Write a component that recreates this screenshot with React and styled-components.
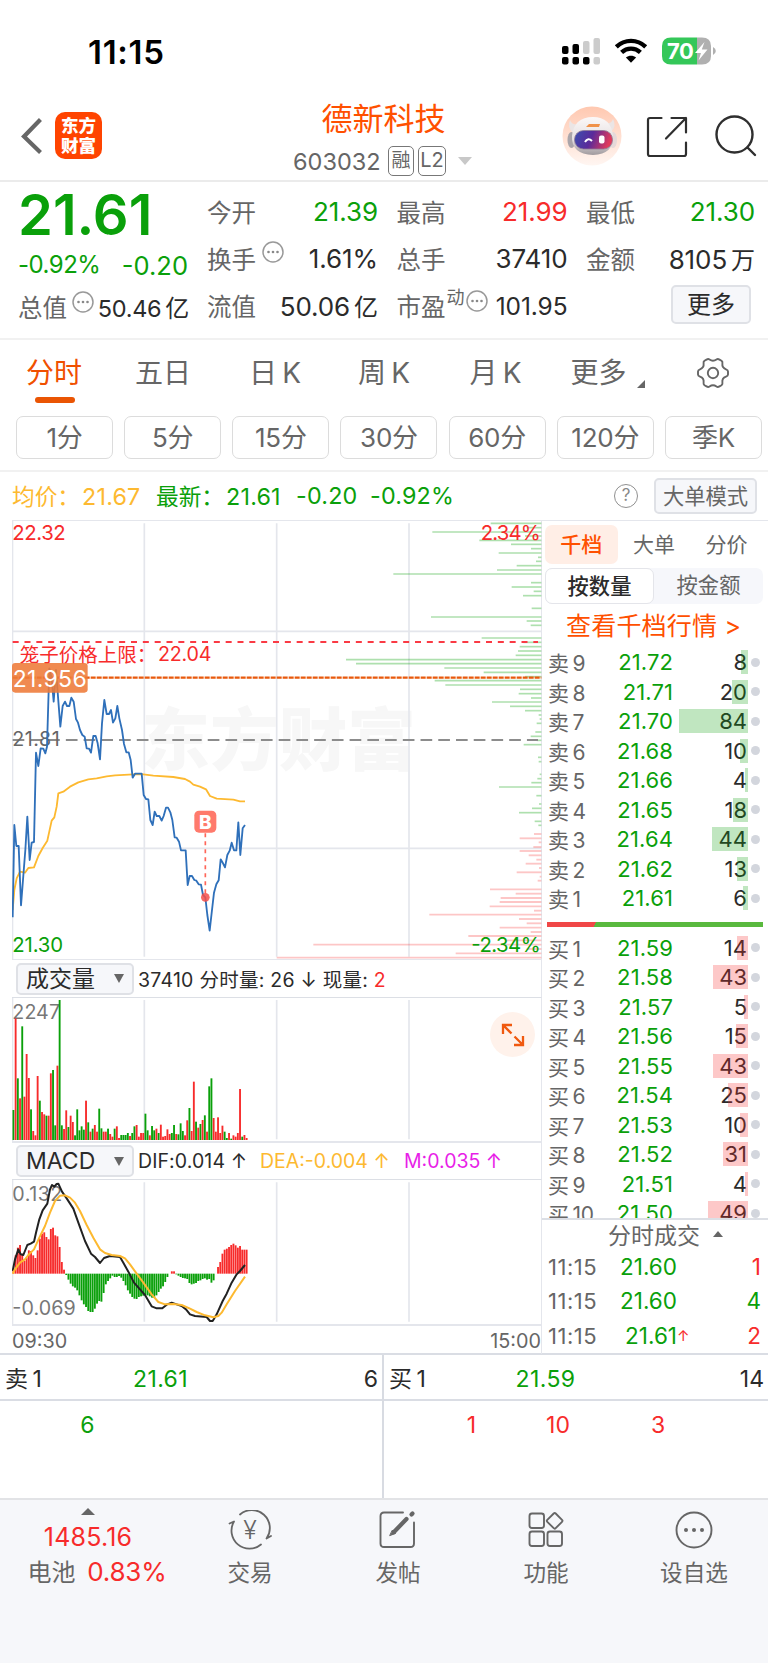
import React from "react";
import styled, { createGlobalStyle } from "styled-components";

const RED = "#f72b2b";
const GREEN = "#0aa00a";
const ORANGE = "#ff5000";
const GREY = "#666";
const INK = "#2b2b2b";
const LINE = "#e4e6ec";

const stats = [
    { label: "今开", value: "21.39", color: GREEN },
    { label: "最高", value: "21.99", color: RED },
    { label: "最低", value: "21.30", color: GREEN },
    { label: "换手", value: "1.61%", info: true },
    { label: "总手", value: "37410" },
    { label: "金额", value: "8105", unit: "万" },
    { label: "流值", value: "50.06", unit: "亿" },
]

const periods = ["分时", "五日", "日 K", "周 K", "月 K", "更多"]
const minutes = ["1分", "5分", "15分", "30分", "60分", "120分", "季K"]

const sells = [
    ["9", "21.72", 8], ["8", "21.71", 20], ["7", "21.70", 84],
    ["6", "21.68", 10], ["5", "21.66", 4], ["4", "21.65", 18],
    ["3", "21.64", 44], ["2", "21.62", 13], ["1", "21.61", 6],
]

const buys = [
    ["1", "21.59", 14], ["2", "21.58", 43], ["3", "21.57", 5],
    ["4", "21.56", 15], ["5", "21.55", 43], ["6", "21.54", 25],
    ["7", "21.53", 10], ["8", "21.52", 31], ["9", "21.51", 4],
    ["10", "21.50", 49],
]

const deals = [
    { time: "11:15", price: "21.60", qty: 1, color: RED },
    { time: "11:15", price: "21.60", qty: 4, color: GREEN },
    { time: "11:15", price: "21.61", qty: 2, color: RED, up: true },
]

// chart drawings use three units per pixel
const priceLine = "38,1222 43,945 49,1008 56,1008 63,1186 69,1110 76,1020 82,920 89,1050 95,998 102,996 108,728 115,768 122,715 130,716 136,730 141,710 148,475 155,505 161,575 168,480 174,560 181,650 188,588 195,575 201,588 208,588 214,563 221,575 228,627 234,638 240,660 247,675 254,680 260,715 267,716 273,728 280,678 287,678 293,700 300,748 306,640 313,570 320,612 327,612 333,600 339,638 346,625 352,588 358,625 366,660 372,702 379,727 386,727 392,750 398,803 405,791 425,791 431,855 438,867 445,868 451,930 458,945 464,905 470,918 478,918 485,932 491,918 498,893 504,893 511,907 517,930 524,982 530,983 537,995 543,1021 557,1021 563,1125 569,1098 576,1098 583,1110 589,1112 596,1123 603,1124 609,1155 616,1162 622,1215 629,1262 636,1200 642,1148 649,1123 656,1111 662,1048 669,1060 675,1072 682,1035 689,1022 695,998 702,1021 709,1021 715,937 721,1035 728,955 735,945"
const averageLine = "38,1200 43,1140 50,1105 60,1085 75,1088 85,1074 102,1072 115,1038 128,1014 142,992 155,932 163,922 170,890 175,850 190,845 210,830 235,817 265,808 290,805 320,799 345,796 400,793 430,793 460,797 520,801 555,807 570,815 580,824 600,830 618,838 630,858 650,866 700,869 720,874 735,874"
const difLine = "38,950 45,915 55,885 62,900 70,902 82,872 92,868 102,862 108,835 118,795 128,768 142,748 150,705 156,692 163,697 170,689 175,688 186,712 200,732 220,763 235,805 255,860 273,898 285,908 300,926 312,911 330,905 360,908 370,925 385,952 402,985 420,1005 435,1022 455,1056 470,1062 487,1062 500,1051 515,1045 530,1050 545,1055 558,1065 570,1080 585,1085 620,1088 630,1100 638,1100 650,1080 668,1040 680,1018 695,985 710,960 720,950 735,932"
const deaLine = "38,958 45,945 60,925 75,915 85,902 102,885 118,850 135,815 150,775 165,740 180,724 195,723 210,730 225,745 240,770 260,812 280,850 300,885 315,896 335,902 360,905 375,912 390,930 410,958 430,985 455,1020 475,1043 495,1050 520,1049 545,1052 570,1063 590,1073 615,1083 640,1089 655,1085 665,1075 680,1050 705,1010 735,967"

// [y, left edge] of each price level
const asks = [[40, 692], [53, 800], [66, 517], [78, 795], [91, 658], [103, 753], [116, 813], [129, 716], [142, 834], [154, 828], [167, 770], [180, 711], [192, 400], [218, 813], [231, 755], [244, 821], [257, 789], [295, 815], [321, 513], [333, 800], [346, 812], [384, 665], [397, 790], [410, 779], [423, 774], [436, 767], [449, 258], [461, 288], [474, 553], [487, 671], [500, 795], [512, 524], [525, 556], [538, 780], [551, 776], [564, 813], [576, 696], [589, 750], [602, 795], [615, 836], [627, 839], [640, 830], [666, 826], [679, 812], [691, 830], [704, 791], [742, 834], [755, 836], [793, 839], [806, 832], [818, 814], [831, 717], [857, 829], [882, 837], [895, 816], [908, 777], [934, 824], [946, 835]]
const bids = [[972, 822], [985, 779], [997, 836], [1011, 820], [1023, 779], [1036, 806], [1049, 829], [1061, 797], [1074, 837], [1087, 770], [1100, 839], [1112, 833], [1138, 690], [1151, 767], [1164, 722], [1176, 719], [1189, 689], [1202, 822], [1214, 508], [1227, 777], [1240, 800], [1253, 719], [1266, 812], [1278, 625], [1291, 740], [1304, 160], [1317, 800], [1330, 587], [1343, 50]]

// one bar a minute, a minus sign marks a falling minute
const volumes = [-90, 365, -185, 125, -341, 130, 258, 186, -92, 27, 14, 192, -118, 84, 77, -73, 73, 200, -210, -44, 223, -420, -44, 33, 89, -39, 73, 54, -14, -92, -29, -41, -31, 118, -53, 25, -34, 45, 25, -94, -35, 25, 25, -34, 18, 10, -34, 41, 6, -15, -15, -15, -21, 12, -21, -41, 45, 10, 21, 21, -79, -29, 14, -42, -29, 34, -21, 46, 10, 12, 32, 18, -21, -45, 18, -17, -50, -27, 14, 59, -96, 27, 175, -55, 37, -48, 60, -74, 25, -161, -185, 66, 25, 68, 21, 43, -25, -6, 21, -4, 14, 10, 21, 153, -10, 15, 6]
const macdBars = [10, 55, 78, 86, 60, 38, 48, 70, 68, 55, 47, 70, 105, 120, 124, 110, 103, 134, 138, 115, 112, 80, 35, 12, -4, -18, -30, -38, -42, -50, -65, -80, -92, -100, -112, -115, -115, -105, -90, -82, -84, -58, -32, -22, -14, -6, -10, -10, -7, -12, -22, -35, -50, -60, -70, -75, -76, -70, -68, -66, -65, -65, -68, -72, -73, -65, -55, -45, -38, -25, -10, 0, 7, 7, -2, -6, -10, -13, -14, -16, -28, -32, -30, -28, -22, -20, -16, -14, -18, -16, -27, -20, 0, 20, 35, 60, 72, 75, 80, 86, 90, 85, 78, 83, 72, 72, 72]

const MoreDots = () => (
    <svg width="22" height="22" viewBox="0 0 22 22" fill="none" stroke="#999" strokeWidth="1.5">
        <circle cx="11" cy="11" r="10" />
        <g fill="#888" stroke="none">
            <circle cx="6.5" cy="11" r="1.3" />
            <circle cx="11" cy="11" r="1.3" />
            <circle cx="15.5" cy="11" r="1.3" />
        </g>
    </svg>
)

const StatusIcons = () => (
    <svg width="160" height="32" viewBox="0 0 160 32">
        <g fill="#000">
            <rect x="2" y="10" width="6.5" height="8" rx="2" />
            <rect x="12.5" y="8" width="6.5" height="10" rx="2" />
            <rect x="2" y="21" width="6.5" height="7.5" rx="2" />
            <rect x="12.5" y="21" width="6.5" height="7.5" rx="2" />
            <rect x="23" y="21" width="6.5" height="7.5" rx="2" />
        </g>
        <g fill="#ccc">
            <rect x="23" y="5" width="6.5" height="13" rx="2" />
            <rect x="33.5" y="2" width="6.5" height="16" rx="2" />
            <rect x="33.5" y="21" width="6.5" height="7.5" rx="2" />
        </g>
        <g fill="none" stroke="#000" strokeWidth="4.4">
            <path d="M56.3 10.8C64.8 2.9 77.2 2.9 85.7 10.8" />
            <path d="M61.6 16.4C67 11.4 75 11.4 80.4 16.4" />
        </g>
        <path d="M71 26.8L65.9 21.6C68.8 19.1 73.2 19.1 76.1 21.6Z" />
        <path d="M111 1.5H137V28.5H111Q102 28.5 102 20V10Q102 1.5 111 1.5Z" fill="#34c759" />
        <path d="M137 1.5H142Q151 1.5 151 10V20Q151 28.5 142 28.5H137Z" fill="#b0b0b0" />
        <path d="M153 11Q155.8 12.5 155.8 15Q155.8 17.5 153 19Z" fill="#b0b0b0" />
        <text x="107" y="23" fill="#fff" fontSize="22" fontWeight="700" letterSpacing="-0.5">70</text>
        <path d="M144.5 6L135 17H141L138.5 24.5L147.5 13.5H141.8Z" fill="#fff" />
    </svg>
)

const Robot = () => (
    <svg width="60" height="60" viewBox="0 0 60 60">
        <defs>
            <linearGradient id="halo" x1="0" y1="0" x2="0" y2="1">
                <stop offset="0" stopColor="#ffc8b0" />
                <stop offset="1" stopColor="#fff6f2" />
            </linearGradient>
            <linearGradient id="visor" x1="0" y1="0" x2="1" y2="0.2">
                <stop offset="0" stopColor="#3c50b0" />
                <stop offset="0.5" stopColor="#5a2a9a" />
                <stop offset="1" stopColor="#e03a5c" />
            </linearGradient>
            <linearGradient id="shell" x1="0" y1="0" x2="0" y2="1">
                <stop offset="0" stopColor="#fbf8f8" />
                <stop offset="0.6" stopColor="#e6e0e1" />
                <stop offset="1" stopColor="#a09a9e" />
            </linearGradient>
        </defs>
        <circle cx="30" cy="30" r="29.5" fill="url(#halo)" />
        <path d="M8 14Q5 21 11 27L19 18Q10 20 8 14ZM51 13Q55 20 49 26L41 17Q49 19 51 13Z" fill="#ebe5e5" />
        <ellipse cx="9.5" cy="34" rx="4" ry="8" fill="#aaa5aa" />
        <ellipse cx="51" cy="34" rx="4" ry="8" fill="#e6d9d9" />
        <path d="M10 30Q12 11 31 11Q49 11 51 30Q52 48 31 49Q9 48 10 30Z" fill="url(#shell)" />
        <path d="M24 21L27 18H38L37 21Z" fill="#f0924a" />
        <rect x="12.5" y="24.5" width="38" height="18.5" rx="9" fill="url(#visor)" stroke="#8f7a96" strokeWidth="0.8" />
        <path d="M23 36Q26 31 30 35" fill="none" stroke="#fff" strokeWidth="2" />
        <rect x="37" y="29.5" width="5.5" height="8" rx="2" fill="#fff" />
    </svg>
)

const ShareIcon = () => (
    <svg width="42" height="42" viewBox="0 0 42 42" fill="none" stroke="#2f2f2f" strokeWidth="2.2" strokeLinecap="round" strokeLinejoin="round">
        <path d="M15.5 2H4Q2 2 2 4V38Q2 40 4 40H38Q40 40 40 38V26.5" />
        <path d="M25.5 2H40V16.5M40 2L20 22.5" />
    </svg>
)

const SearchIcon = () => (
    <svg width="42" height="42" viewBox="0 0 42 42" fill="none" stroke="#2f2f2f" strokeWidth="2.4" strokeLinecap="round">
        <circle cx="19.5" cy="19.5" r="18" />
        <path d="M32.5 32.5L40 40" />
    </svg>
)

const GearIcon = () => (
    <svg width="32" height="32" viewBox="0 0 32 32" fill="none" stroke={GREY} strokeWidth="1.9" strokeLinejoin="round">
        <path d="M9.5 2.6Q11.2 1.6 12.5 2.5Q16 4.9 19.5 2.5Q20.8 1.6 22.5 2.6L24.5 3.8Q25.8 4.8 25.4 6.4Q24.8 10.8 29 12.3Q31 13 31 14.5V17.5Q31 19 29 19.7Q24.8 21.2 25.4 25.6Q25.8 27.2 24.5 28.2L22.5 29.4Q20.8 30.4 19.5 29.5Q16 27.1 12.5 29.5Q11.2 30.4 9.5 29.4L7.5 28.2Q6.2 27.2 6.6 25.6Q7.2 21.2 3 19.7Q1 19 1 17.5V14.5Q1 13 3 12.3Q7.2 10.8 6.6 6.4Q6.2 4.8 7.5 3.8Z" />
        <circle cx="16" cy="16" r="5.2" />
    </svg>
)

const TradeIcon = () => (
    <svg width="44" height="40" viewBox="0 0 44 40" fill="none" stroke={GREY} strokeWidth="1.8" strokeLinecap="round" strokeLinejoin="round">
        <path d="M12 4.5A18 18 0 0 1 38.5 28.5L43 26" />
        <path d="M33 34.500A18 18 0 0 1 6 11.5L1.5 13.500" />
        <text x="22" y="28.5" fill={GREY} stroke="none" fontSize="25" fontWeight="300" textAnchor="middle">¥</text>
    </svg>
)

const PostIcon = () => (
    <svg width="40" height="40" viewBox="0 0 40 40" fill="none" stroke={GREY} strokeWidth="1.9" strokeLinecap="round">
        <path d="M25 2.5H6Q2.5 2.5 2.5 6V33.5Q2.5 37 6 37H32.5Q36 37 36 33.5V12.5" />
        <path d="M28.5 9L16 22" strokeWidth="4.2" />
        <path d="M12 25.5L17.5 23.5L14.5 20.5Z" fill={GREY} strokeWidth="1" />
        <path d="M33.5 4.5L34.5 3.5" strokeWidth="4.2" />
    </svg>
)

const FeatureIcon = () => (
    <svg width="38" height="40" viewBox="0 0 38 40" fill="none" stroke={GREY} strokeWidth="1.9" strokeLinejoin="round">
        <rect x="2.5" y="3.5" width="14.5" height="14.5" rx="2.5" />
        <rect x="2.5" y="21.5" width="14.5" height="14.5" rx="2.5" />
        <rect x="20.5" y="21.5" width="14.5" height="14.5" rx="2.5" />
        <path d="M26.7 3.5Q27.7 2.5 28.7 3.5L35 9.8Q36 10.8 35 11.8L28.7 18.2Q27.7 19.2 26.7 18.2L20.3 11.8Q19.3 10.8 20.3 9.8Z" />
    </svg>
)

const WatchIcon = () => (
    <svg width="38" height="40" viewBox="0 0 38 40" fill="none" stroke={GREY} strokeWidth="1.9">
        <circle cx="19" cy="20" r="17.5" />
        <g fill={GREY} stroke="none">
            <circle cx="11" cy="20" r="2" />
            <circle cx="19" cy="20" r="2" />
            <circle cx="27" cy="20" r="2" />
        </g>
    </svg>
)

const actions = [
    { label: "交易", Icon: TradeIcon },
    { label: "发帖", Icon: PostIcon },
    { label: "功能", Icon: FeatureIcon },
    { label: "设自选", Icon: WatchIcon },
]

const PriceChart = () => (
    <svg width="530" height="439" viewBox="36 30 1590 1317">
        <text x="424" y="764" fill="#f7f7f7" fontSize="206" fontWeight="900">东方财富</text>
        <g stroke={LINE} strokeWidth="4">
            <path d="M38 30V1347M1625 30V1347" />
            <path d="M433 40V1340M830 40V1340M1227 40V1340M38 364H1624M38 1015H1624" strokeWidth="5" />
            <path d="M38 31H1624" />
        </g>
        <g stroke={GREEN} strokeOpacity="0.33" strokeWidth="5">
            {asks.map(([y, left]) => <path key={y} d={`M${left + 780} ${y}H1624`} />)}
        </g>
        <g stroke={RED} strokeOpacity="0.27" strokeWidth="5.5">
            {bids.map(([y, left]) => <path key={y} d={`M${left + 780} ${y}H1624`} />)}
        </g>
        <path d="M38 396H1614" stroke="#fa3a44" strokeWidth="6" strokeDasharray="18 17.5" />
        <path d="M38 690H1614" stroke="#8c8c8c" strokeWidth="5.5" strokeDasharray="35 18.2" />
        <path d="M38 503H1624" stroke="#e8590c" strokeWidth="7" strokeDasharray="15 3" />
        <text x="37" y="709" fill={GREY} fontSize="59" textLength="142">21.81</text>
        <g fill="none" strokeWidth="5.5" strokeLinejoin="round">
            <polyline points={averageLine} stroke="#fdb930" />
            <polyline points={priceLine} stroke="#2f70ba" />
        </g>
        <g fontSize="61">
            <text x="37" y="91" fill={RED} textLength="160">22.32</text>
            <text x="37" y="1327" fill={GREEN} textLength="152">21.30</text>
            <text x="1622" y="91" fill={RED} textAnchor="end" textLength="180">2.34%</text>
            <text x="1622" y="1327" fill={GREEN} textAnchor="end" textLength="208">-2.34%</text>
            <text x="59" y="455" fill={RED} fontSize="58.5">笼子价格上限：</text>
            <text x="474" y="454" fill={RED} fontSize="59" textLength="160">22.04</text>
        </g>
        <rect x="36" y="459" width="227" height="89" rx="10" fill="#ee7a38" fillOpacity="0.88" />
        <text x="38" y="530" fill="#fff" fontSize="69" textLength="222">21.956</text>
        <path d="M616 970V1155" stroke="#ff6659" strokeWidth="5" strokeDasharray="12 12" />
        <circle cx="616" cy="1162" r="13" fill="#f54e49" fillOpacity="0.85" />
        <rect x="583" y="902" width="66" height="66" rx="14" fill="#ff7a6c" />
        <text x="616" y="956" fill="#fff" fontSize="57" fontWeight="800" textAnchor="middle">B</text>
    </svg>
)

const VolumeChart = () => (
    <svg width="530" height="144" viewBox="36 129 1590 432">
        <g stroke={LINE} strokeWidth="4">
            <path d="M38 127V561M1625 127V562" />
            <path d="M433 135V553M830 135V553M1227 135V553" strokeWidth="5" />
        </g>
        <text x="37" y="192" fill="#777" fontSize="59" textLength="143">2247</text>
        {volumes.map((v, i) => (
            <rect key={i} x={37.5 + i * 6.6} y={555 - Math.abs(v)} width="5.6" height={Math.abs(v)} fill={v > 0 ? RED : GREEN} />
        ))}
    </svg>
)

const MacdChart = () => (
    <svg width="530" height="144" viewBox="36 677 1590 432">
        <g stroke={LINE} strokeWidth="4">
            <path d="M38 675V1110M1625 675V1110" />
            <path d="M433 684V1102M830 684V1102M1227 684V1102" strokeWidth="5" />
        </g>
        {macdBars.map((v, i) => (
            <rect key={i} x={37.5 + i * 6.6} y={v > 0 ? 958 - v : 958} width="5.6" height={Math.abs(v)} fill={v > 0 ? RED : GREEN} />
        ))}
        <g fill="#777" fontSize="59">
            <text x="37" y="741" textLength="150">0.132</text>
            <text x="37" y="1083" textLength="190">-0.069</text>
        </g>
        <g fill="none" strokeWidth="6" strokeLinejoin="round">
            <polyline points={difLine} stroke="#222" />
            <polyline points={deaLine} stroke="#fdb930" />
        </g>
    </svg>
)

const Book = ({ side, rows, color }) => (
    <div>
        {rows.map(([level, price, qty]) => (
            <Level key={level}>
                <span className="name">{side} {level}</span>
                <span className="price">{price}</span>
                <span className="qty">
                    {qty}
                    <Depth $color={color} style={{ width: qty * 0.82 }} />
                </span>
                <i />
            </Level>
        ))}
    </div>
)

const App = () => {
    return (
        <Page>
            <GlobalStyle />
            <StatusBar>
                <strong>11:15</strong>
                <StatusIcons />
            </StatusBar>

            <Header>
                <div className="left">
                    <svg width="22" height="36" viewBox="0 0 22 36" fill="none" stroke={GREY} strokeWidth="4.2">
                        <path d="M18 3L3 18.5L18 33" strokeLinecap="square" />
                    </svg>
                    <Logo>东方<br />财富</Logo>
                </div>
                <div className="title">
                    <h1>德新科技</h1>
                    <p>
                        <span className="code">603032</span>
                        <Badge>融</Badge>
                        <Badge $wide>L2</Badge>
                        <Caret $color="#c8c8c8" $w={7} $h={8} $down />
                    </p>
                </div>
                <div className="right">
                    <Robot />
                    <ShareIcon />
                    <SearchIcon />
                </div>
            </Header>

            <Quote>
                <div className="price">
                    <strong>21.61</strong>
                    <p className="change"><small>-0.92%</small><span>-0.20</span></p>
                    <Stat>
                        <span className="label">总值<sup className="low"><MoreDots /></sup></span>
                        <b>50.46<em>亿</em></b>
                    </Stat>
                </div>
                <div className="grid">
                    {stats.map((s) => (
                        <Stat key={s.label} $color={s.color}>
                            <span className="label">{s.label}{s.info && <sup><MoreDots /></sup>}</span>
                            <b>{s.value}{s.unit && <em>{s.unit}</em>}</b>
                        </Stat>
                    ))}
                    <Stat>
                        <span className="label">市盈<small>动</small><sup className="tight"><MoreDots /></sup></span>
                        <b className="narrow">101.95</b>
                    </Stat>
                    <MoreButton>更多</MoreButton>
                </div>
            </Quote>

            <Periods>
                {periods.map((p, i) => (
                    <Period key={p} $active={i === 0} $more={p === "更多"}>{p}</Period>
                ))}
                <div className="gear"><GearIcon /></div>
            </Periods>
            <Minutes>
                {minutes.map((m) => <button key={m}>{m}</button>)}
            </Minutes>

            <Summary>
                <span className="avg">均价：<b>21.67</b></span>
                <span className="last">最新：<b>21.61</b></span>
                <b className="diff">-0.20</b>
                <b className="pct">-0.92%</b>
                <Help>?</Help>
                <button>大单模式</button>
            </Summary>

            <Market>
                <Charts>
                    <PriceChart />
                    <Indicator>
                        <button>成交量<Caret $color={GREY} $w={5} $h={9} $down /></button>
                        <span className="vol">37410 分时量: 26 ↓ 现量: <em>2</em></span>
                    </Indicator>
                    <VolumeBox>
                        <VolumeChart />
                        <Expand>
                            <svg width="24" height="24" viewBox="0 0 24 24" fill="none" stroke="#f0590f" strokeWidth="2.3">
                                <path d="M2 11V2H11M2 2L10.5 10.5M22 13V22H13M22 22L13.5 13.5" />
                            </svg>
                        </Expand>
                    </VolumeBox>
                    <Indicator $thick>
                        <button>MACD<Caret $color={GREY} $w={5} $h={9} $down /></button>
                        <span className="dif">DIF:0.014 ↑</span>
                        <span className="dea">DEA:-0.004 ↑</span>
                        <span className="m">M:0.035 ↑</span>
                    </Indicator>
                    <MacdChart />
                    <Times><span>09:30</span><span>15:00</span></Times>
                </Charts>

                <Side>
                    <SideTabs>
                        <span className="on">千档</span>
                        <span>大单</span>
                        <span>分价</span>
                    </SideTabs>
                    <Segment>
                        <span className="on">按数量</span>
                        <span>按金额</span>
                    </Segment>
                    <DepthLink>查看千档行情 &gt;</DepthLink>
                    <Book side="卖" rows={sells} color="rgba(10, 160, 10, 0.26)" />
                    <Ratio />
                    <BuyBox>
                        <Book side="买" rows={buys} color="rgba(247, 43, 43, 0.26)" />
                    </BuyBox>
                    <Deals>
                        <h2>分时成交<Caret $color={GREY} $w={5} $h={6} /></h2>
                        {deals.map((d, i) => (
                            <Deal key={i} $color={d.color}>
                                <span className="time">{d.time}</span>
                                <span className="price">{d.price}</span>
                                <span className="arrow">{d.up && "↑"}</span>
                                <span className="qty">{d.qty}</span>
                            </Deal>
                        ))}
                    </Deals>
                </Side>
            </Market>

            <Queues>
                <Queue $color={GREEN}>
                    <div className="head"><span>卖 1</span><b>21.61</b><span>6</span></div>
                    <div className="orders"><span>6</span></div>
                </Queue>
                <Queue $color={RED}>
                    <div className="head"><span>买 1</span><b>21.59</b><span>14</span></div>
                    <div className="orders"><span>1</span><span>10</span><span>3</span></div>
                </Queue>
            </Queues>

            <BottomBar>
                <Sector>
                    <Caret $color={GREY} $w={7} $h={7} />
                    <strong>1485.16</strong>
                    <p>电池 <b>0.83%</b></p>
                </Sector>
                {actions.map(({ label, Icon }) => (
                    <Action key={label}>
                        <Icon />
                        <span>{label}</span>
                    </Action>
                ))}
            </BottomBar>
        </Page>
    )
}

const GlobalStyle = createGlobalStyle`
    * {
        box-sizing: border-box;
        margin: 0;
        padding: 0;
    }
    body {
        background: #fff;
        font-family: Inter, "Noto Sans CJK SC", sans-serif;
        color: ${INK};
    }
    button {
        font: inherit;
        color: ${GREY};
        background: #f6f7fa;
        border: 2px solid #dfe1e6;
        border-radius: 5px;
        white-space: nowrap;
    }
    svg {
        display: block;
        flex: none;
    }
    b, em, i {
        font-weight: 400;
        font-style: normal;
    }
`

const Page = styled.main`
    width: 768px;
    height: 1663px;
    overflow: hidden;
    white-space: nowrap;
`

const Caret = styled.i`
    flex: none;
    border: ${p => p.$w}px solid transparent;
    border-${p => p.$down ? "top" : "bottom"}: ${p => p.$h}px solid ${p => p.$color};
    border-${p => p.$down ? "bottom" : "top"}: 0;
`

const StatusBar = styled.div`
    display: flex;
    justify-content: space-between;
    align-items: center;
    height: 92px;
    padding: 12px 48px 0 88px;
    strong {
        color: #000;
        font-size: 33px;
        font-weight: 600;
        letter-spacing: 0.7px;
    }
`

const Header = styled.header`
    display: grid;
    grid-template-columns: 293px 1fr 206px;
    height: 90px;
    border-bottom: 2px solid #ebebeb;
    .left {
        display: flex;
        align-items: center;
        gap: 12px;
        padding: 0 0 1px 21px;
    }
    .title {
        h1 {
            width: 181px;
            font-size: 31px;
            font-weight: 400;
            line-height: 36px;
            padding-top: 9px;
            color: ${ORANGE};
            text-align: center;
        }
        p {
            display: flex;
            align-items: center;
            margin-top: 9px;
            height: 30px;
            color: ${GREY};
        }
        .code {
            width: 95px;
            font-size: 23.5px;
        }
        ${Caret} {
            margin-left: 8px;
        }
    }
    .right {
        display: flex;
        align-items: center;
        svg + svg {
            margin: 1px 0 0 24px;
        }
        svg:last-child {
            margin: 0 0 0 27px;
        }
    }
`

const Logo = styled.div`
    width: 47px;
    height: 47px;
    padding-top: 4px;
    border-radius: 10px;
    background: #ff4400;
    color: #fff;
    font-size: 17.5px;
    font-weight: 800;
    line-height: 19.5px;
    text-align: center;
`

const Badge = styled.span`
    width: ${p => p.$wide ? 28 : 26}px;
    height: 30px;
    margin-right: 4px;
    border: 1.5px solid #777;
    border-radius: 5px;
    font-size: ${p => p.$wide ? 20 : 19}px;
    line-height: 27px;
    text-align: center;
`

const Stat = styled.div`
    display: flex;
    justify-content: space-between;
    align-items: center;
    height: 47px;
    font-size: 24.5px;
    .label {
        display: flex;
        color: ${GREY};
    }
    sup {
        padding-left: 6px;
        &.low {
            padding: 2px 0 0 5px;
        }
        &.tight {
            padding: 2px 0 0 1px;
        }
    }
    small {
        font-size: 18px;
        line-height: 20px;
        padding-left: 1px;
    }
    b {
        margin-right: -1px;
        font-size: 26px;
        letter-spacing: -0.1px;
        color: ${p => p.$color || INK};
    }
    em {
        font-size: 24px;
        padding-left: 4px;
    }
`

const Quote = styled.section`
    display: grid;
    grid-template-columns: 188px 547px;
    column-gap: 19px;
    height: 158px;
    border-bottom: 2px solid #f1f1f1;
    .price {
        padding-left: 18px;
        color: ${GREEN};
        strong {
            display: block;
            height: 59px;
            padding-top: 5px;
            font-size: 56px;
            font-weight: 600;
            line-height: 56px;
            letter-spacing: 0;
        }
        .change {
            display: flex;
            justify-content: space-between;
            height: 42px;
            font-size: 25.5px;
            line-height: 50px;
            small {
                font-size: 24px;
                line-height: 48px;
                letter-spacing: -0.5px;
            }
        }
        b {
            font-size: 23.5px;
            letter-spacing: -0.3px;
        }
    }
    .grid {
        display: grid;
        grid-template-columns: 170px 170px 168px;
        column-gap: 19.5px;
        align-content: start;
        padding-top: 6px;
    }
    .narrow {
        padding-top: 1px;
        font-size: 24.5px;
    }
`

const MoreButton = styled.button`
    justify-self: end;
    width: 80px;
    height: 39px;
    margin: 3px 3px 0 0;
    font-size: 24px;
    line-height: 35px;
    && {
        color: ${INK};
    }
`

const Periods = styled.nav`
    display: grid;
    grid-template-columns: 108px 110px 114px 104px 119px 87px 1fr;
    height: 70px;
    .gear {
        justify-self: center;
        padding-top: 17px;
        margin-left: 16px;
    }
`

const Period = styled.span`
    position: relative;
    font-size: 28px;
    line-height: 67px;
    text-align: center;
    word-spacing: -2.5px;
    color: ${p => p.$active ? "#f05000" : GREY};
    &::after {
        content: "";
        position: absolute;
        ${p => p.$active && `
            left: 35px;
            top: 57px;
            width: 40px;
            height: 6px;
            border-radius: 3px;
            background: #ea5504;
        `}
        ${p => p.$more && `
            right: -3px;
            top: 40px;
            border: 4px solid ${GREY};
            border-top-color: transparent;
            border-left-color: transparent;
        `}
    }
`

const Minutes = styled.div`
    display: flex;
    justify-content: space-between;
    height: 62px;
    padding: 6px 6px 11px 16px;
    border-bottom: 2px solid #f1f1f1;
    button {
        width: 97px;
        background: #fff;
        border-color: #dcdcdc;
        border-width: 1.5px;
        border-radius: 7px;
        font-size: 26px;
        line-height: 42px;
        letter-spacing: -0.2px;
    }
`

const Summary = styled.div`
    display: flex;
    align-items: center;
    height: 48px;
    padding: 0 12px 1px;
    font-size: 22.7px;
    color: ${GREEN};
    .avg {
        width: 144px;
        color: #fdb930;
    }
    .last {
        width: 140px;
    }
    .diff {
        width: 74px;
    }
    .pct {
        flex: 1;
    }
    b {
        font-size: 23.3px;
        letter-spacing: 0.2px;
    }
    span b {
        padding-left: 2px;
    }
    button {
        width: 103px;
        height: 36px;
        margin: 1px -1px 0 16px;
        font-size: 21.3px;
        line-height: 32px;
    }
`

const Help = styled.span`
    width: 24px;
    height: 24px;
    border: 1.6px solid #909090;
    border-radius: 50%;
    font-size: 17px;
    line-height: 21px;
    text-align: center;
    color: #888;
`

const Market = styled.section`
    display: grid;
    grid-template-columns: 530px 226px;
    height: 835px;
    padding-left: 12px;
    border-bottom: 2px solid #dadde4;
`

const Charts = styled.div`
    height: 833px;
`

const Indicator = styled.div`
    display: flex;
    align-items: center;
    height: 39px;
    margin-top: ${p => p.$thick ? -1 : 0}px;
    padding-left: 4px;
    border-top: ${p => p.$thick ? 2 : 1}px solid ${LINE};
    border-bottom: 1px solid #dcdfe5;
    border-right: 1px solid ${LINE};
    font-size: 19.5px;
    button {
        display: flex;
        align-items: center;
        justify-content: space-between;
        width: 118px;
        height: 32px;
        margin-right: 4px;
        padding: 0 8px;
        font-size: 23px;
        line-height: 28px;
        color: ${INK};
    }
    em {
        color: ${RED};
    }
    .vol {
        letter-spacing: 0.25px;
    }
    .dif {
        width: 122px;
        letter-spacing: 0.1px;
    }
    .dea {
        width: 144px;
        color: #fdb930;
    }
    .m {
        color: #e81ee8;
    }
`

const VolumeBox = styled.div`
    position: relative;
`

const Expand = styled.div`
    position: absolute;
    right: 7px;
    top: 14px;
    display: flex;
    align-items: center;
    justify-content: center;
    width: 45px;
    height: 45px;
    border-radius: 50%;
    background: #fff2eb;
`

const Times = styled.div`
    display: flex;
    justify-content: space-between;
    height: 30px;
    border-top: 2px solid ${LINE};
    border-right: 1px solid ${LINE};
    font-size: 19.8px;
    line-height: 30px;
    color: ${GREY};
`

const Side = styled.aside`
    height: 833px;
    border-top: 1px solid ${LINE};
`

const SideTabs = styled.div`
    display: grid;
    grid-template-columns: repeat(3, 72.6px);
    height: 43px;
    padding: 4px 0 0 3px;
    font-size: 21px;
    line-height: 39px;
    text-align: center;
    color: ${GREY};
    .on {
        height: 39px;
        border-radius: 7px;
        background: #ffeee6;
        color: ${ORANGE};
        font-weight: 500;
    }
`

const Segment = styled.div`
    display: grid;
    grid-template-columns: 1fr 1fr;
    width: 218px;
    height: 36px;
    margin: 4px 0 0 3px;
    border-radius: 7px;
    background: #f6f7fb;
    font-size: 21.3px;
    line-height: 34px;
    text-align: center;
    color: ${GREY};
    .on {
        background: #fff;
        border: 1px solid #e4e5ea;
        border-radius: 7px;
        color: ${INK};
        font-weight: 500;
    }
`

const DepthLink = styled.p`
    height: 43px;
    padding-left: 24px;
    font-size: 25px;
    line-height: 44px;
    letter-spacing: 0.2px;
    color: ${ORANGE};
`

const Level = styled.div`
    display: grid;
    grid-template-columns: 61px 64px 75px 1fr;
    align-items: center;
    height: 29.5px;
    padding-left: 6px;
    font-size: 22px;
    .name {
        font-size: 21px;
        letter-spacing: -0.2px;
        word-spacing: -2px;
        color: ${GREY};
    }
    .price {
        text-align: right;
        letter-spacing: 0.1px;
        color: ${GREEN};
    }
    .qty {
        position: relative;
        height: 24px;
        padding-right: 1px;
        line-height: 25px;
        text-align: right;
    }
    i {
        width: 9px;
        height: 9px;
        margin-left: 3px;
        border-radius: 50%;
        background: #d3d6dd;
    }
`

const Depth = styled.span`
    position: absolute;
    right: 0;
    top: 0;
    height: 24px;
    background: ${p => p.$color};
`

const Ratio = styled.div`
    width: 216px;
    height: 5px;
    margin: 9px 0 6px 5px;
    background: linear-gradient(120deg, #f04747 22.5%, #59b93e 22.5%);
`

const BuyBox = styled.div`
    height: 285px;
    overflow: hidden;
`

const Deals = styled.div`
    border-top: 2px solid #dcdfe5;
    h2 {
        display: flex;
        align-items: center;
        gap: 13px;
        height: 30px;
        padding: 0 0 2px 66px;
        font-size: 23px;
        font-weight: 400;
        color: ${GREY};
    }
`

const Deal = styled.div`
    display: grid;
    grid-template-columns: 54px 75px 14px 70px;
    height: 34.5px;
    padding-left: 6px;
    font-size: 22.5px;
    line-height: 34px;
    .time {
        font-size: 22px;
        letter-spacing: 0.5px;
        color: ${GREY};
    }
    .price {
        text-align: right;
        color: ${GREEN};
    }
    .arrow {
        font-size: 15px;
        color: ${RED};
    }
    .qty {
        text-align: right;
        color: ${p => p.$color};
    }
`

const Queues = styled.section`
    display: grid;
    grid-template-columns: 384px 384px;
    height: 143px;
`

const Queue = styled.div`
    font-size: 23px;
    &:first-child {
        border-right: 2px solid #d8dbe2;
    }
    .head {
        display: grid;
        grid-template-columns: 80px 1fr 142px;
        height: 46px;
        padding: 0 4px 0 5px;
        border-bottom: 2px solid #dadde4;
        line-height: 49px;
        word-spacing: -2px;
        b {
            text-align: center;
            letter-spacing: 0.4px;
            color: ${GREEN};
        }
        span:last-child {
            text-align: right;
        }
    }
    .orders {
        display: grid;
        grid-template-columns: 91px 82px 118px;
        padding-left: 42px;
        line-height: 49px;
        text-align: center;
        color: ${p => p.$color};
    }
`

const BottomBar = styled.footer`
    display: grid;
    grid-template-columns: 176px repeat(4, 148px);
    height: 165px;
    padding-top: 10px;
    background: #f6f7fa;
    border-top: 2px solid #e2e3e6;
    color: ${GREY};
`

const Sector = styled.div`
    display: flex;
    flex-direction: column;
    align-items: center;
    ${Caret} {
        margin-top: -2px;
    }
    strong {
        padding-top: 5px;
        font-size: 25px;
        font-weight: 400;
        line-height: 35px;
        letter-spacing: 0.2px;
        color: ${RED};
    }
    p {
        padding-left: 18px;
        font-size: 24px;
        line-height: 34px;
    }
    b {
        padding-left: 5px;
        font-size: 26px;
        letter-spacing: -0.2px;
        color: ${RED};
    }
`

const Action = styled.div`
    display: flex;
    flex-direction: column;
    align-items: center;
    span {
        font-size: 22.6px;
        line-height: 45px;
    }
`

export default App
